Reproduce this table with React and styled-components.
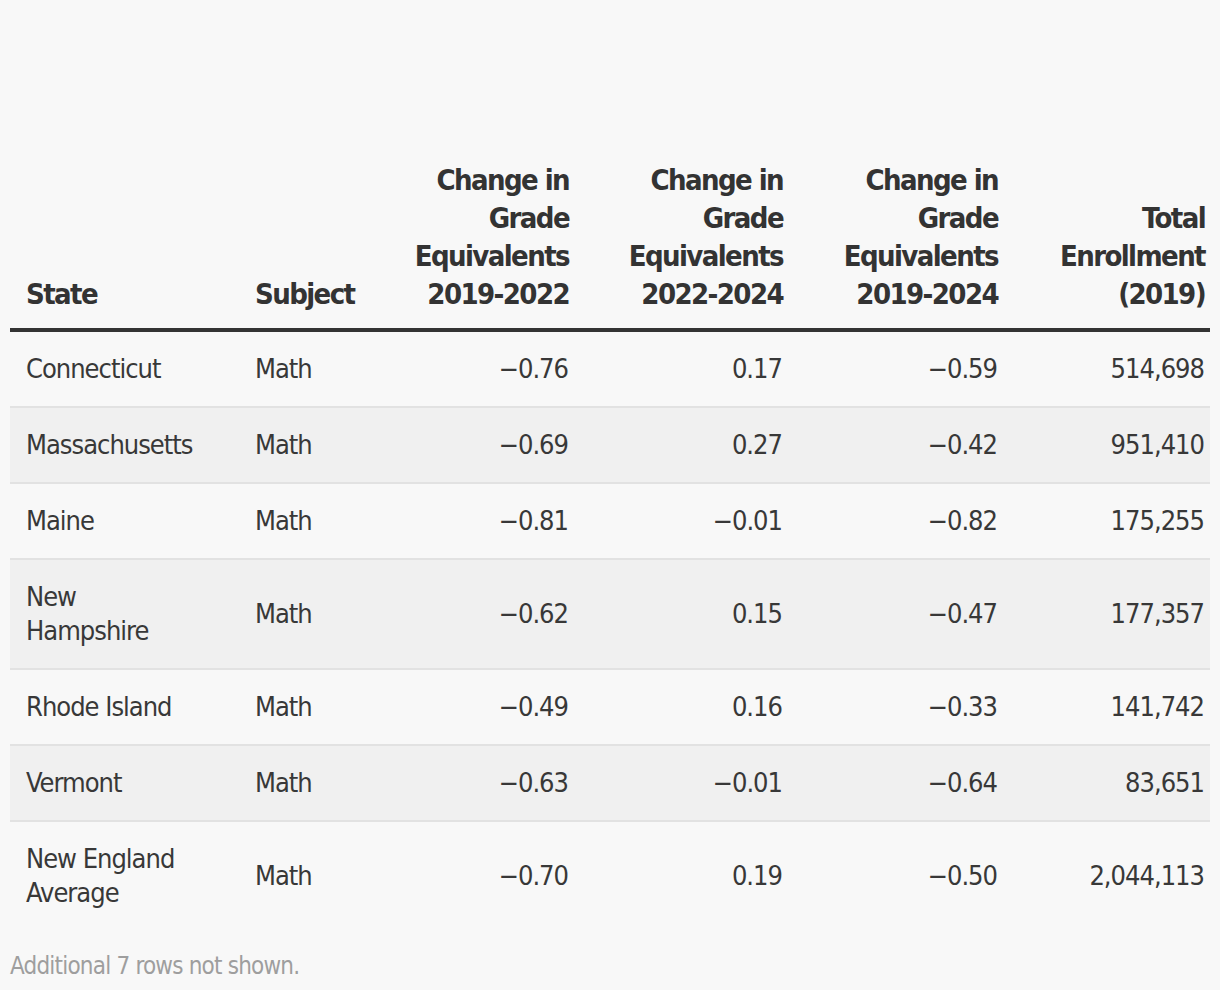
import styled, { createGlobalStyle } from "styled-components";

const rows = [
  { state: "Connecticut", subject: "Math", a: "−0.76", b: "0.17", c: "−0.59", total: "514,698" },
  { state: "Massachusetts", subject: "Math", a: "−0.69", b: "0.27", c: "−0.42", total: "951,410" },
  { state: "Maine", subject: "Math", a: "−0.81", b: "−0.01", c: "−0.82", total: "175,255" },
  { state: "New Hampshire", subject: "Math", a: "−0.62", b: "0.15", c: "−0.47", total: "177,357" },
  { state: "Rhode Island", subject: "Math", a: "−0.49", b: "0.16", c: "−0.33", total: "141,742" },
  { state: "Vermont", subject: "Math", a: "−0.63", b: "−0.01", c: "−0.64", total: "83,651" },
  { state: "New England Average", subject: "Math", a: "−0.70", b: "0.19", c: "−0.50", total: "2,044,113" },
];

const columns = [
  { key: "state", label: "State", width: 229, align: "left" },
  { key: "subject", label: "Subject", width: 121, align: "left" },
  { key: "a", label: "Change in Grade Equivalents 2019-2022", width: 214, align: "right" },
  { key: "b", label: "Change in Grade Equivalents 2022-2024", width: 214, align: "right" },
  { key: "c", label: "Change in Grade Equivalents 2019-2024", width: 215, align: "right" },
  { key: "total", label: "Total Enrollment (2019)", width: 207, align: "right" },
];

const GlobalStyle = createGlobalStyle`
  html, body {
    margin: 0;
    padding: 0;
    background: #f8f8f8;
  }
  body {
    font-family: "DejaVu Sans Condensed", "Liberation Sans Narrow", sans-serif;
    color: #333;
  }
`;

export default function App() {
  return (
    <>
      <GlobalStyle />
      <Page>
        <Table>
          <colgroup>
            {columns.map((col) => (
              <col key={col.key} style={{ width: col.width }} />
            ))}
          </colgroup>
          <thead>
            <tr>
              {columns.map((col) => (
                <HeadCell key={col.key} $align={col.align}>
                  {col.label}
                </HeadCell>
              ))}
            </tr>
          </thead>
          <tbody>
            {rows.map((row) => (
              <Row key={row.state}>
                {columns.map((col) => (
                  <Cell key={col.key} $align={col.align}>
                    {col.key === "state" ? <StateName>{row.state}</StateName> : row[col.key]}
                  </Cell>
                ))}
              </Row>
            ))}
          </tbody>
        </Table>
        <Note>Additional 7 rows not shown.</Note>
      </Page>
    </>
  );
}

const Page = styled.div`
  padding: 151px 10px 0;
  box-sizing: border-box;
  width: 1220px;
  min-height: 990px;
`;

const Table = styled.table`
  width: 1200px;
  table-layout: fixed;
  border-collapse: collapse;
  border-spacing: 0;
`;

const HeadCell = styled.th`
  vertical-align: bottom;
  text-align: ${({ $align }) => $align};
  font-weight: 700;
  font-size: 29px;
  line-height: 38px;
  letter-spacing: -1.6px;
  color: #333;
  padding: 10px 5px 15px 16px;
  border-bottom: 4px solid #333;
`;

const Row = styled.tr`
  background: #f8f8f8;
  border-bottom: 2px solid #e2e2e2;

  &:nth-child(even) {
    background: #f0f0f0;
  }

  &:last-child {
    border-bottom: none;
  }
`;

const Cell = styled.td`
  text-align: ${({ $align }) => $align};
  vertical-align: middle;
  font-size: 27px;
  line-height: 34px;
  letter-spacing: -1px;
  font-weight: 400;
  color: #383838;
  padding: 20px 6px 20px 16px;
`;

const StateName = styled.span`
  display: block;
  max-width: 172px;
`;

const Note = styled.div`
  margin-top: 20px;
  font-size: 24px;
  line-height: 32px;
  letter-spacing: -0.8px;
  color: #9e9e9e;
`;
